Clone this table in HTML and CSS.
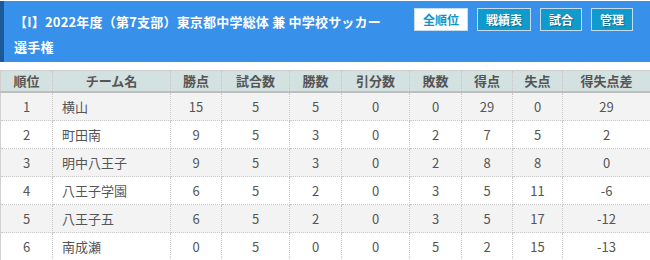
FILE: index.html
```html
<!DOCTYPE html>
<html lang="ja">
<head>
<meta charset="utf-8">
<link rel="stylesheet" href="styles.css">
</head>
<body>
<div class="head">
  <h1 class="title">【I】2022年度（第7支部）東京都中学総体 兼 中学校サッカー<br>選手権</h1>
  <div class="btns">
    <a class="btn btn-on">全順位</a>
    <a class="btn">戦績表</a>
    <a class="btn">試合</a>
    <a class="btn">管理</a>
  </div>
</div>
<table class="rank">
  <colgroup>
    <col style="width:52px"><col style="width:118px"><col style="width:51px"><col style="width:68px"><col style="width:52px"><col style="width:68px"><col style="width:52px"><col style="width:51px"><col style="width:50px"><col style="width:88px">
  </colgroup>
  <thead>
    <tr><th>順位</th><th>チーム名</th><th>勝点</th><th>試合数</th><th>勝数</th><th>引分数</th><th>敗数</th><th>得点</th><th>失点</th><th>得失点差</th></tr>
  </thead>
  <tbody>
    <tr><td>1</td><td class="team">横山</td><td>15</td><td>5</td><td>5</td><td>0</td><td>0</td><td>29</td><td>0</td><td>29</td></tr>
    <tr><td>2</td><td class="team">町田南</td><td>9</td><td>5</td><td>3</td><td>0</td><td>2</td><td>7</td><td>5</td><td>2</td></tr>
    <tr><td>3</td><td class="team">明中八王子</td><td>9</td><td>5</td><td>3</td><td>0</td><td>2</td><td>8</td><td>8</td><td>0</td></tr>
    <tr><td>4</td><td class="team">八王子学園</td><td>6</td><td>5</td><td>2</td><td>0</td><td>3</td><td>5</td><td>11</td><td>-6</td></tr>
    <tr><td>5</td><td class="team">八王子五</td><td>6</td><td>5</td><td>2</td><td>0</td><td>3</td><td>5</td><td>17</td><td>-12</td></tr>
    <tr><td>6</td><td class="team">南成瀬</td><td>0</td><td>5</td><td>0</td><td>0</td><td>5</td><td>2</td><td>15</td><td>-13</td></tr>
  </tbody>
</table>
</body>
</html>
```
FILE: styles.css
```css
html, body {
  margin: 0;
  padding: 0;
  background: #fff;
}
body {
  font-family: "Noto Sans CJK JP", "Noto Sans", sans-serif;
  color: #555;
}
.head {
  display: flex;
  align-items: flex-start;
  height: 61px;
  margin-top: 1px;
  background: #3790ea;
  border-left: 4px solid #1b5a98;
  margin-bottom: 8px;
}
.title {
  flex: 1;
  margin: 0;
  padding: 8px 0 0 10px;
  font-size: 13px;
  line-height: 25px;
  font-weight: bold;
  color: #fff;
  letter-spacing: 0.2px;
}
.btns {
  display: flex;
  gap: 9px;
  padding: 7px 17px 0 0;
}
.btn {
  display: block;
  height: 21px;
  line-height: 21px;
  padding: 0 8px;
  border: 1px solid #c4dcec;
  background: #119bcc;
  color: #fff;
  font-size: 12px;
  font-weight: bold;
  text-shadow: 1px 1px 1px rgba(0,0,0,0.35);
}
.btn-on {
  background: #fff;
  color: #1492c8;
  text-shadow: none;
}
.rank {
  width: 650px;
  border-collapse: collapse;
  table-layout: fixed;
  font-size: 13px;
}
.rank th {
  height: 20px;
  background: #d3e1e1;
  color: #555;
  font-weight: bold;
  font-size: 13px;
  line-height: 20px;
  border: 1px dotted #c6c6c6;
  border-top: 1px solid #cfcfcf;
  border-bottom: 2px solid #bdbdbd;
  padding: 0;
  text-align: center;
}
.rank td {
  height: 27px;
  padding: 0;
  line-height: 18px;
  text-align: center;
  border: 1px dotted #c8c8c8;
  color: #555;
}
.rank th:first-child, .rank td:first-child {
  border-left: 1px solid #d0d0d0;
}
.rank th:last-child, .rank td:last-child {
  border-right: 1px solid #d0d0d0;
}
.rank td.team {
  text-align: left;
  padding-left: 9px;
}
.rank tbody tr:nth-child(odd) td {
  background: #f3f3f3;
}
```
